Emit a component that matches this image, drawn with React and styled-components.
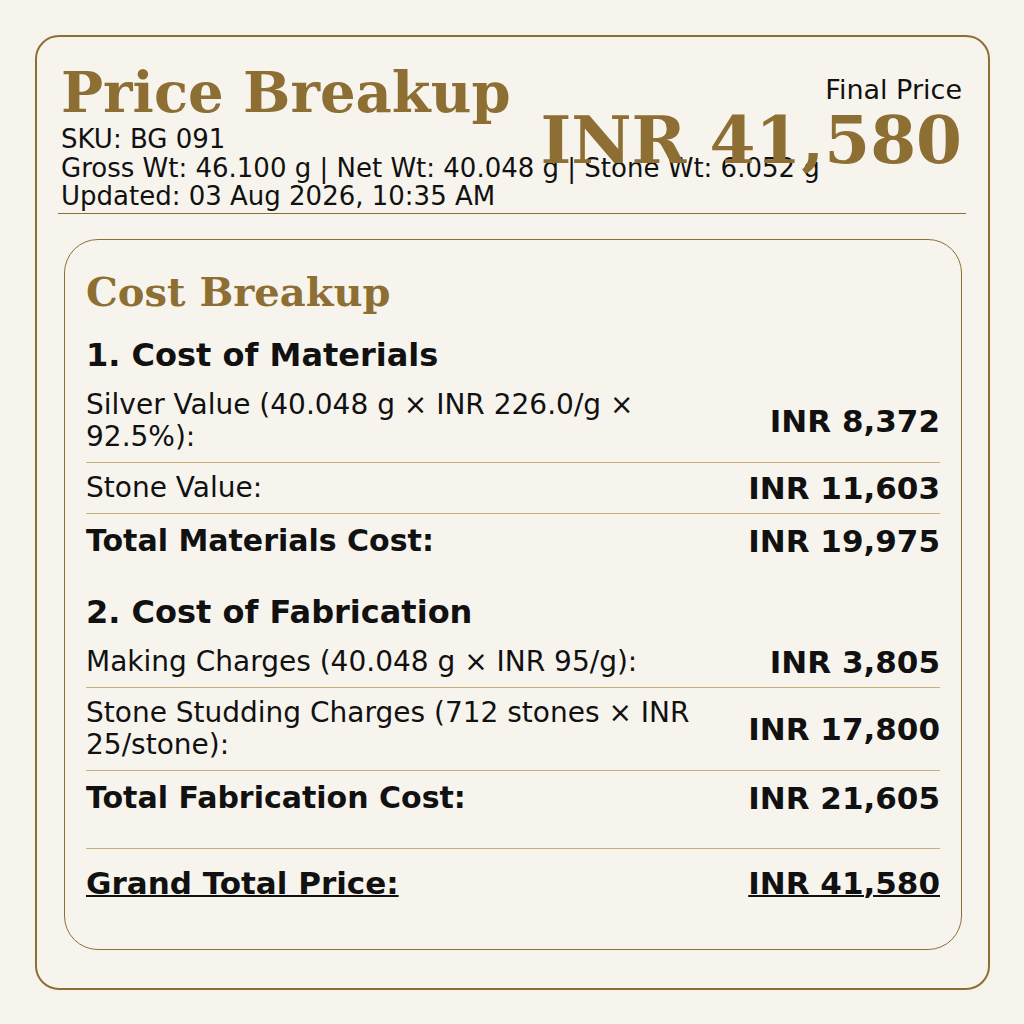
import React from "react";
import styled, { createGlobalStyle } from "styled-components";

const GOLD = "#8d6f33";
const LINE = "#c6b07c";
const INK = "#111111";

const Global = createGlobalStyle`
  html, body { margin: 0; padding: 0; background: #f6f3ed; }
  body { font-family: "DejaVu Sans", sans-serif; color: ${INK}; }
  * { box-sizing: border-box; }
`;

const Page = styled.div`
  width: 1024px;
  height: 1024px;
  padding: 35px 34px 34px 35px;
`;

const Card = styled.div`
  height: 955px;
  border: 2.5px solid ${GOLD};
  border-radius: 24px;
  background: #f7f4ee;
  padding: 22px 26px 0 24px;
  display: flex;
  flex-direction: column;
`;

const Header = styled.header`
  display: flex;
  align-items: flex-start;
`;

const HeaderLeft = styled.div`
  flex: 1;
  min-width: 0;
  white-space: nowrap;
`;

const Title = styled.h1`
  margin: 0;
  font-family: "DejaVu Serif", serif;
  font-weight: bold;
  font-size: 56px;
  line-height: 66px;
  color: ${GOLD};
`;

const Meta = styled.div`
  font-size: 26px;
  line-height: 28.5px;
  color: ${INK};
`;

const HeaderRight = styled.div`
  flex-shrink: 0;
  text-align: right;
  padding-top: 16px;
`;

const PriceLabel = styled.div`
  font-size: 27px;
  line-height: 30px;
`;

const BigPrice = styled.div`
  font-family: "DejaVu Serif", serif;
  font-weight: bold;
  font-size: 66px;
  line-height: 70px;
  color: ${GOLD};
`;

const HeaderRule = styled.hr`
  margin: 2px 0 0 -3px;
  border: 0;
  border-top: 1px solid ${GOLD};
  width: calc(100% + 7px);
`;

const Panel = styled.section`
  margin: 25px 0.5px 0 2.5px;
  height: 711px;
  border: 1.5px solid ${GOLD};
  border-radius: 34px;
  padding: 28px 20.5px 0 21.5px;
  display: flex;
  flex-direction: column;
`;

const PanelTitle = styled.h2`
  margin: 0;
  font-family: "DejaVu Serif", serif;
  font-weight: bold;
  font-size: 40px;
  line-height: 48px;
  color: ${GOLD};
`;

const SectionTitle = styled.h3`
  margin: ${(p) => (p.$first ? "20px" : "25px")} 0 6px;
  font-size: 32px;
  line-height: 38px;
  font-weight: bold;
  color: ${INK};
`;

const Row = styled.div`
  display: flex;
  align-items: center;
  justify-content: space-between;
  gap: 40px;
  padding: ${(p) => (p.$total ? "10px" : "9px")} 0;
  border-bottom: ${(p) => (p.$last ? "none" : `1px solid ${LINE}`)};
`;

const Label = styled.div`
  font-size: ${(p) => (p.$bold ? "30px" : "28px")};
  line-height: ${(p) => (p.$bold ? "34px" : "32px")};
  font-weight: ${(p) => (p.$bold ? "bold" : "normal")};
  max-width: 615px;
`;

const Amount = styled.div`
  font-size: 31px;
  line-height: 32px;
  font-weight: bold;
  white-space: nowrap;
`;

const GrandRule = styled.div`
  margin-top: 23px;
  border-top: 1px solid ${LINE};
`;

const GrandRow = styled.div`
  display: flex;
  justify-content: space-between;
  align-items: center;
  padding-top: 16px;
  font-size: 31px;
  line-height: 36px;
  font-weight: bold;
  text-decoration: underline;
  text-decoration-thickness: 2px;
  text-underline-offset: 1px;
`;

const sections = [
  {
    title: "1. Cost of Materials",
    rows: [
      ["Silver Value (40.048 g × INR 226.0/g × 92.5%):", "INR 8,372"],
      ["Stone Value:", "INR 11,603"],
      ["Total Materials Cost:", "INR 19,975", true],
    ],
  },
  {
    title: "2. Cost of Fabrication",
    rows: [
      ["Making Charges (40.048 g × INR 95/g):", "INR 3,805"],
      ["Stone Studding Charges (712 stones × INR 25/stone):", "INR 17,800"],
      ["Total Fabrication Cost:", "INR 21,605", true],
    ],
  },
];

export default function App() {
  return (
    <>
      <Global />
      <Page>
        <Card>
          <Header>
            <HeaderLeft>
              <Title>Price Breakup</Title>
              <Meta>SKU: BG 091</Meta>
              <Meta>Gross Wt: 46.100 g | Net Wt: 40.048 g | Stone Wt: 6.052 g</Meta>
              <Meta>Updated: 03 Aug 2026, 10:35 AM</Meta>
            </HeaderLeft>
            <HeaderRight>
              <PriceLabel>Final Price</PriceLabel>
              <BigPrice>INR 41,580</BigPrice>
            </HeaderRight>
          </Header>
          <HeaderRule />
          <Panel>
            <PanelTitle>Cost Breakup</PanelTitle>
            {sections.map((s, i) => (
              <div key={s.title}>
                <SectionTitle $first={i === 0}>{s.title}</SectionTitle>
                {s.rows.map(([label, amount, total], j) => (
                  <Row key={label} $total={total} $last={j === s.rows.length - 1}>
                    <Label $bold={total}>{label}</Label>
                    <Amount>{amount}</Amount>
                  </Row>
                ))}
              </div>
            ))}
            <GrandRule />
            <GrandRow>
              <span>Grand Total Price:</span>
              <span>INR 41,580</span>
            </GrandRow>
          </Panel>
        </Card>
      </Page>
    </>
  );
}
